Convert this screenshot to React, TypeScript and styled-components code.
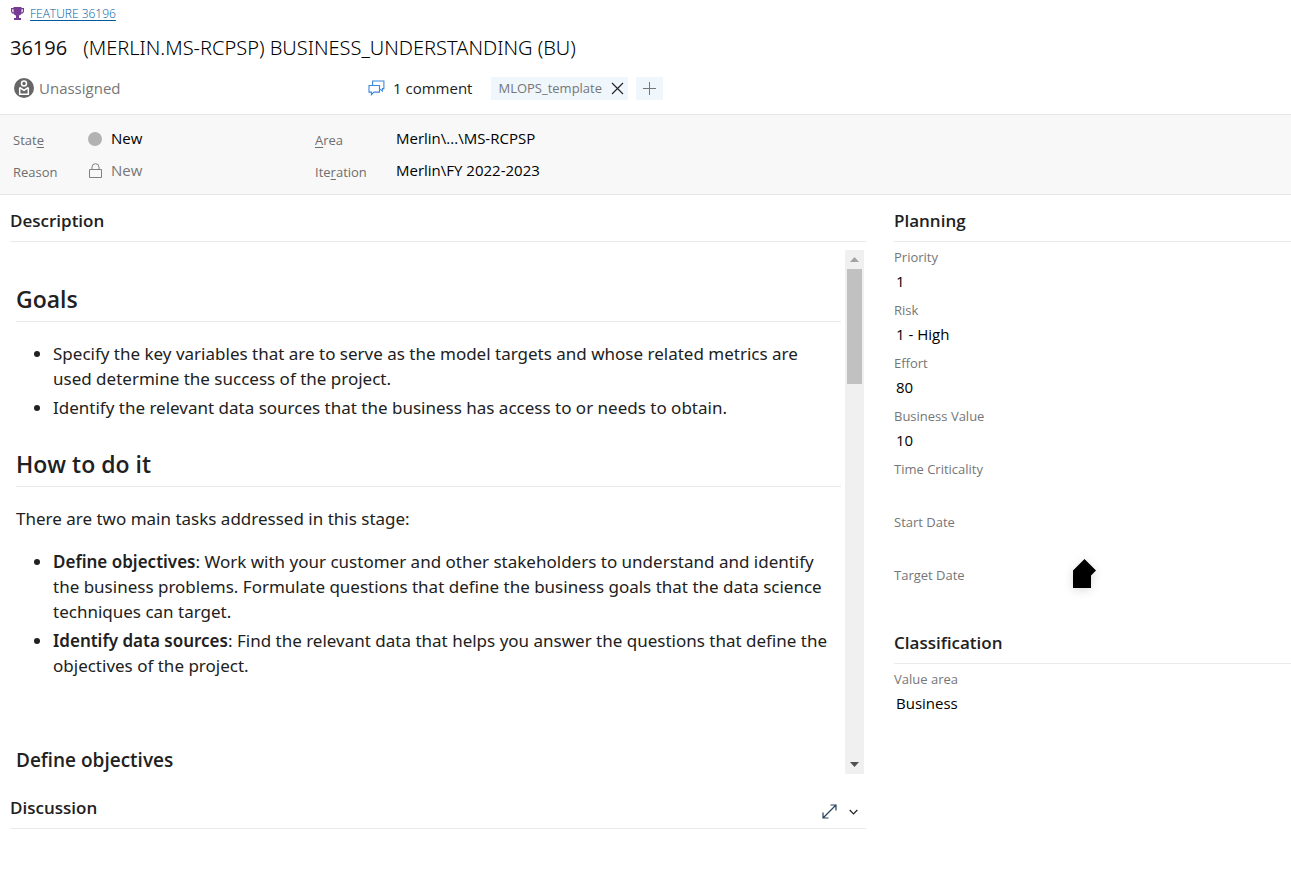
import React from 'react';
import styled, { createGlobalStyle } from 'styled-components';

const GlobalStyle = createGlobalStyle`
  * { box-sizing: border-box; }
  body {
    margin: 0;
    background: #fff;
    color: #212121;
    font-family: "Open Sans", "Noto Sans", sans-serif;
    font-size: 15px;
  }
  button, input { font-family: inherit; }
`;

const Header = styled.header`
  padding: 3px 10px 14px;
`;

const FeatureLink = styled.a`
  display: inline-flex;
  align-items: center;
  gap: 6px;
  height: 20px;
  font-size: 12px;
  color: #005a9e;
  text-decoration: none;
  span { font-weight: 300; text-decoration: underline 1px; text-underline-offset: 2px; }
`;

const TitleRow = styled.div`
  display: flex;
  align-items: center;
  gap: 16px;
  height: 28px;
  margin-top: 9px;
  font-size: 20px;
`;

const ItemId = styled.span`
  color: #111;
`;

const TitleInput = styled.input`
  flex: 1;
  min-width: 0;
  padding: 0;
  border: 0;
  outline: 0;
  background: transparent;
  font-family: "Noto Sans", sans-serif;
  font-size: 20px;
  font-weight: 300;
  color: #000;
`;

const MetaRow = styled.div`
  display: flex;
  align-items: center;
  height: 24px;
  margin-top: 15px;
`;

const PlainButton = styled.button`
  display: inline-flex;
  align-items: center;
  padding: 0;
  border: 0;
  background: transparent;
  color: inherit;
  cursor: pointer;
`;

const Assignee = styled(PlainButton)`
  gap: 5px;
  width: 354px;
  padding-left: 4px;
  font-size: 15px;
  color: #767676;
`;

const Comments = styled(PlainButton)`
  gap: 8px;
  margin: 0 19px 0 4px;
  font-size: 15px;
  color: #212121;
`;

const Tag = styled.span`
  display: inline-flex;
  align-items: center;
  gap: 9px;
  height: 23px;
  padding: 0 4px 0 7px;
  margin-right: 8px;
  background: #eff6fc;
  font-size: 13px;
  color: #767676;
`;

const AddTag = styled(PlainButton)`
  justify-content: center;
  width: 27px;
  height: 23px;
  background: #eff6fc;
`;

const StatusBar = styled.section`
  display: grid;
  grid-template-columns: 302px minmax(0, 1fr);
  padding: 8px 13px 7px;
  border-top: 1px solid #e6e6e6;
  border-bottom: 1px solid #e6e6e6;
  background: #f8f8f8;
`;

const StatusField = styled.div<{ $label: number }>`
  display: grid;
  grid-template-columns: ${p => p.$label}px minmax(0, 1fr);
  align-items: center;
  height: 32px;
`;

const StatusLabel = styled.label`
  padding-top: 2px;
  font-size: 13px;
  color: #6e6e6e;
  u { text-underline-offset: 2px; }
`;

const StatusValue = styled.div`
  display: flex;
  align-items: center;
  gap: 9px;
`;

const TextInput = styled.input<{ $muted?: boolean }>`
  flex: 1;
  width: 100%;
  min-width: 0;
  height: 24px;
  padding: 0 0 2px;
  border: 0;
  outline: 0;
  background: transparent;
  font-size: 15px;
  color: ${p => (p.$muted ? '#767676' : '#000')};
`;

const StateDot = styled.span`
  width: 14px;
  height: 14px;
  border-radius: 50%;
  background: #b2b2b2;
`;

const Columns = styled.main`
  display: grid;
  grid-template-columns: minmax(0, 1fr) 397px;
  column-gap: 28px;
  padding-left: 10px;
`;

const SectionHeader = styled.div`
  display: flex;
  align-items: center;
  justify-content: space-between;
  height: 47px;
  padding: 4px 8px 0 0;
  border-bottom: 1px solid #eaeaea;
`;

const SectionTitle = styled.h2`
  margin: 0;
  font-size: 17px;
  font-weight: 600;
`;

const HeaderTools = styled.div`
  display: flex;
  gap: 12px;
  padding-top: 8px;
`;

const Scroller = styled.div`
  display: flex;
  margin: 8px 2px 8px 0;
`;

const RichText = styled.article`
  flex: 1;
  min-width: 0;
  padding: 35px 4px 0 6px;
  font-family: "Noto Sans", sans-serif;
  font-size: 17px;
  line-height: 25px;
`;

const DocHeading = styled.h2`
  margin: 0 0 19px;
  padding-bottom: 8px;
  border-bottom: 1px solid #eaeaea;
  font-family: "Open Sans", sans-serif;
  font-size: 23px;
  font-weight: 600;
  line-height: 28px;
  ul + & { margin-top: 30px; }
`;

const DocSubheading = styled.h3`
  margin: 69px 0 0;
  font-family: "Open Sans", sans-serif;
  font-size: 19px;
  font-weight: 600;
  line-height: 27px;
`;

const DocParagraph = styled.p`
  margin: 0 0 18px;
`;

const DocList = styled.ul`
  margin: 0;
  padding: 0 8px 0 37px;
  li + li { margin-top: 4px; }
  b { font-weight: 600; }
`;

const Scrollbar = styled.div`
  display: flex;
  flex-direction: column;
  align-items: center;
  width: 19px;
  background: #f0f0f0;
`;

const ScrollArrow = styled(PlainButton)`
  justify-content: center;
  width: 19px;
  height: 19px;
`;

const ScrollThumb = styled.div`
  width: 15px;
  height: 115px;
  margin-bottom: auto;
  background: #c1c1c1;
`;

const Fields = styled.div`
  padding-top: 4px;
`;

const Field = styled.div`
  position: relative;
  height: 53px;
`;

const FieldLabel = styled.label`
  display: block;
  height: 24px;
  font-size: 13px;
  line-height: 22px;
  color: #767676;
`;

const FieldInput = styled(TextInput)`
  padding-left: 2px;
`;

const Marker = styled.svg`
  position: absolute;
  left: 170px;
  top: -12px;
  filter: drop-shadow(0 2px 5px rgba(0, 0, 0, 0.14));
`;

const HouseMarker = () => (
  <Marker width="42" height="46" viewBox="0 0 42 46" aria-hidden="true">
    <path d="M9 18.500 20.500 7 32 18.500 27 23.500V36H9z" fill="#000" />
  </Marker>
);

const TrophyIcon = () => (
  <svg width="14" height="14" viewBox="0 0 14 14" fill="#773b93" aria-hidden="true">
    <path
      fillRule="evenodd"
      d="M3.500 1h8v1H14v3c0 1.600-1.100 2.600-2.700 2.800-.5.900-1.300 1.500-2.300 1.800V12h2v2H4v-2h2V9.600C5 9.300 4.200 8.700 3.700 7.800 2.100 7.600 1 6.600 1 5V2h2.500zM2.200 3.200V5c0 .8.500 1.300 1.300 1.500V3.200zM11.500 3.200v3.300c.8-.2 1.300-.7 1.300-1.500V3.200z"
    />
  </svg>
);

const AvatarIcon = () => (
  <svg width="20" height="20" viewBox="0 0 20 20" aria-hidden="true">
    <circle cx="10" cy="10" r="10" fill="#666" />
    <g fill="none" stroke="#fff" strokeWidth="1.500">
      <circle cx="10" cy="5.500" r="2.500" />
      <path d="M5.700 9.500v6.800h8.600V9.500M5.700 9.500 10 12.300l4.300-2.800" />
    </g>
  </svg>
);

const CommentIcon = () => (
  <svg width="17" height="16" viewBox="0 0 17 16" fill="none" stroke="#3c87dc" strokeWidth="1.100" aria-hidden="true">
    <path d="M4.600 5.500V1h11.300v7.600h-1.500v2.500l-2.300-2" />
    <path d="M1 5.500h10.500v6.600H6l-2.600 2.600v-2.600H1z" />
  </svg>
);

const CloseIcon = () => (
  <svg width="13" height="13" viewBox="0 0 13 13" stroke="#212121" strokeWidth="1.100" aria-hidden="true">
    <path d="M1 1l11 11M12 1 1 12" />
  </svg>
);

const PlusIcon = () => (
  <svg width="13" height="13" viewBox="0 0 13 13" stroke="#767676" aria-hidden="true">
    <path d="M6.500 0v13M0 6.500h13" />
  </svg>
);

const LockIcon = () => (
  <svg width="14" height="16" viewBox="0 0 14 16" fill="none" stroke="#808080" aria-hidden="true">
    <path d="M1.500 6.500h12v8h-12zM4 6.500V4.200a3.500 3.500 0 0 1 7 0v2.300" />
  </svg>
);

const ExpandIcon = () => (
  <svg width="15" height="15" viewBox="0 0 15 15" fill="none" stroke="#24405e" strokeWidth="1.200" aria-hidden="true">
    <path d="M1 14 14 1M8.500 1H14v5.500M1 8.500V14h5.500" />
  </svg>
);

const ChevronIcon = () => (
  <svg width="9" height="15" viewBox="0 0 9 15" fill="none" stroke="#212121" strokeWidth="1.200" aria-hidden="true">
    <path d="M.7 6 4.500 9.800 8.300 6" />
  </svg>
);

const Triangle = ({ down }: { down?: boolean }) => (
  <svg width="9" height="5" viewBox="0 0 9 5" aria-hidden="true">
    <path d={down ? 'M0 0h9L4.500 5z' : 'M0 5h9L4.500 0z'} fill={down ? '#505050' : '#a3a3a3'} />
  </svg>
);

const planning = [
  { id: 'priority', label: 'Priority', value: '1' },
  { id: 'risk', label: 'Risk', value: '1 - High' },
  { id: 'effort', label: 'Effort', value: '80' },
  { id: 'business-value', label: 'Business Value', value: '10' },
  { id: 'time-criticality', label: 'Time Criticality', value: '' },
  { id: 'start-date', label: 'Start Date', value: '' },
  { id: 'target-date', label: 'Target Date', value: '' },
];

export default function App() {
  return (
    <>
      <GlobalStyle />
      <Header>
        <FeatureLink href="#36196">
          <TrophyIcon />
          <span>FEATURE 36196</span>
        </FeatureLink>
        <TitleRow>
          <ItemId>36196</ItemId>
          <TitleInput aria-label="Title" defaultValue="(MERLIN.MS-RCPSP) BUSINESS_UNDERSTANDING (BU)" />
        </TitleRow>
        <MetaRow>
          <Assignee type="button">
            <AvatarIcon />
            Unassigned
          </Assignee>
          <Comments type="button">
            <CommentIcon />
            1 comment
          </Comments>
          <Tag>
            MLOPS_template
            <PlainButton type="button" aria-label="Remove tag"><CloseIcon /></PlainButton>
          </Tag>
          <AddTag type="button" aria-label="Add tag"><PlusIcon /></AddTag>
        </MetaRow>
      </Header>

      <StatusBar>
        <StatusField $label={75}>
          <StatusLabel htmlFor="state">Stat<u>e</u></StatusLabel>
          <StatusValue>
            <StateDot />
            <TextInput id="state" defaultValue="New" />
          </StatusValue>
        </StatusField>
        <StatusField $label={81}>
          <StatusLabel htmlFor="area"><u>A</u>rea</StatusLabel>
          <TextInput id="area" defaultValue="Merlin\...\MS-RCPSP" />
        </StatusField>
        <StatusField $label={75}>
          <StatusLabel htmlFor="reason">Reason</StatusLabel>
          <StatusValue>
            <LockIcon />
            <TextInput id="reason" readOnly $muted defaultValue="New" />
          </StatusValue>
        </StatusField>
        <StatusField $label={81}>
          <StatusLabel htmlFor="iteration">Ite<u>r</u>ation</StatusLabel>
          <TextInput id="iteration" defaultValue="Merlin\FY 2022-2023" />
        </StatusField>
      </StatusBar>

      <Columns>
        <div>
          <SectionHeader><SectionTitle>Description</SectionTitle></SectionHeader>
          <Scroller>
            <RichText>
              <DocHeading>Goals</DocHeading>
              <DocList>
                <li>Specify the key variables that are to serve as the model targets and whose related metrics are used determine the success of the project.</li>
                <li>Identify the relevant data sources that the business has access to or needs to obtain.</li>
              </DocList>
              <DocHeading>How to do it</DocHeading>
              <DocParagraph>There are two main tasks addressed in this stage:</DocParagraph>
              <DocList>
                <li><b>Define objectives</b>: Work with your customer and other stakeholders to understand and identify the business problems. Formulate questions that define the business goals that the data science techniques can target.</li>
                <li><b>Identify data sources</b>: Find the relevant data that helps you answer the questions that define the objectives of the project.</li>
              </DocList>
              <DocSubheading>Define objectives</DocSubheading>
            </RichText>
            <Scrollbar>
              <ScrollArrow type="button" aria-label="Scroll up"><Triangle /></ScrollArrow>
              <ScrollThumb />
              <ScrollArrow type="button" aria-label="Scroll down"><Triangle down /></ScrollArrow>
            </Scrollbar>
          </Scroller>
          <SectionHeader>
            <SectionTitle>Discussion</SectionTitle>
            <HeaderTools>
              <PlainButton type="button" aria-label="Maximize"><ExpandIcon /></PlainButton>
              <PlainButton type="button" aria-label="Collapse"><ChevronIcon /></PlainButton>
            </HeaderTools>
          </SectionHeader>
        </div>

        <aside>
          <SectionHeader><SectionTitle>Planning</SectionTitle></SectionHeader>
          <Fields>
            {planning.map(f => (
              <Field key={f.id}>
                <FieldLabel htmlFor={f.id}>{f.label}</FieldLabel>
                <FieldInput id={f.id} defaultValue={f.value} />
                {f.id === 'target-date' && <HouseMarker />}
              </Field>
            ))}
          </Fields>
          <SectionHeader><SectionTitle>Classification</SectionTitle></SectionHeader>
          <Fields>
            <Field>
              <FieldLabel htmlFor="value-area">Value area</FieldLabel>
              <FieldInput id="value-area" defaultValue="Business" />
            </Field>
          </Fields>
        </aside>
      </Columns>
    </>
  );
}
